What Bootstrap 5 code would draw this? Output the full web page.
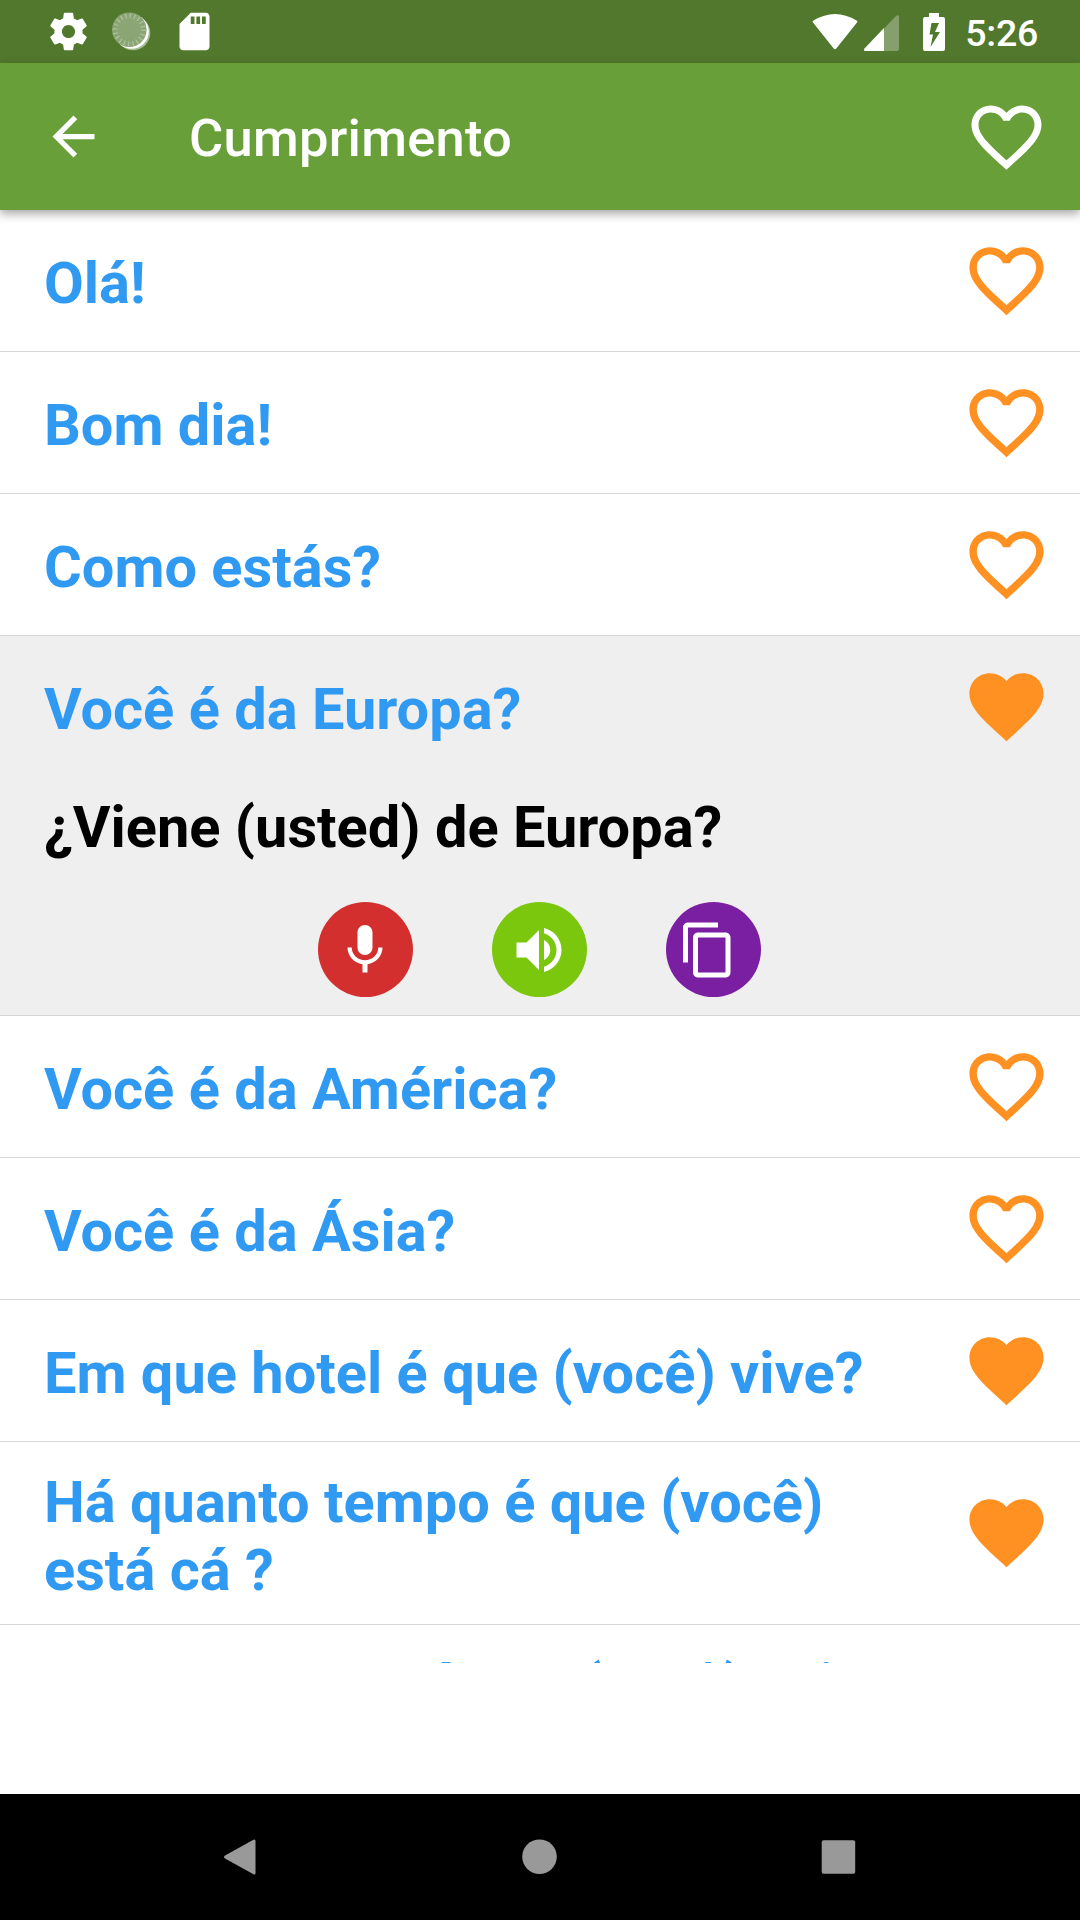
<!DOCTYPE html>
<html lang="pt">
<head>
<meta charset="utf-8">
<meta name="viewport" content="width=device-width, initial-scale=1">
<title>Cumprimento</title>
<link href="https://cdn.jsdelivr.net/npm/bootstrap@5.3.0/dist/css/bootstrap.min.css" rel="stylesheet">
<style>
  body { font-family: Roboto, "Noto Sans", sans-serif; background: #fff; }
  svg { display: block; flex: none; }
  .screen { width: 1080px; height: 1920px; }
  .statusbar { height: 63px; padding: 0 42px 0 46px; background: #51782c; color: #fff; }
  .status-icons { gap: 18px; }
  .clock { font-size: 37.5px; font-weight: 500; line-height: 44px; padding-top: 2px; margin-left: 20px; letter-spacing: -.3px; }
  .appbar { height: 147px; padding: 0 31px 0 42px; background: #689f38; color: #fff; box-shadow: 0 4px 9px rgba(0,0,0,.34); z-index: 2; }
  .app-title { font-size: 52.5px; font-weight: 500; line-height: 62px; margin-left: 84px; padding-top: 3px; letter-spacing: .25px; }
  .phrases { height: 1453px; }
  .phrase { border: 0; border-bottom: 1px solid #d6d6d6; border-radius: 0; padding: 0; color: #309af2; background: #fff; }
  .phrase-line { min-height: 141px; padding: 20px 29px 20px 44px; }
  .phrase-text { width: 840px; font-size: 57.75px; font-weight: 700; line-height: 68px; padding-top: 4px; }
  .phrase-line.two-lines { height: 182px; padding-bottom: 21px; }
  .two-lines .phrase-text { padding-top: 6px; }
  .phrase.open { background: #efefef; height: 380px; }
  .translation { color: #000; padding: 10px 44px 0; font-size: 57.75px; font-weight: 700; line-height: 68px; margin-top: 6px; }
  .heart { color: #ff9122; width: 89px; height: 89px; }
  .actions { gap: 79px; margin-top: 41px; padding-right: 2px; }
  .round-btn { width: 95px; height: 95px; color: #fff; border: 0; border-radius: 50%; padding: 0; }
  .btn-mic { background: #d32f2f; }
  .btn-play { background: #7bc70e; }
  .btn-copy { background: #7b1fa2; padding-right: 10px; }
  .sysnav { height: 126px; background: #000; color: #999; gap: 264px; padding: 0 2px 1px 0; }
</style>
</head>
<body>
<svg width="0" height="0" class="d-none">
  <symbol id="heart-o" viewBox="0 0 24 24"><path fill="currentColor" d="M16.5 3c-1.74 0-3.41.81-4.5 2.09C10.91 3.81 9.24 3 7.5 3 4.42 3 2 5.42 2 8.5c0 3.78 3.4 6.86 8.55 11.54L12 21.35l1.45-1.32C18.6 15.36 22 12.28 22 8.5 22 5.42 19.58 3 16.5 3zm-4.4 15.55l-.1.1-.1-.1C7.14 14.24 4 11.39 4 8.5 4 6.5 5.5 5 7.5 5c1.54 0 3.04.99 3.57 2.36h1.87C13.46 5.99 14.96 5 16.5 5c2 0 3.5 1.5 3.5 3.5 0 2.89-3.14 5.74-7.9 10.05z"/></symbol>
  <symbol id="heart-f" viewBox="0 0 24 24"><path fill="currentColor" d="M12 21.35l-1.45-1.32C5.4 15.36 2 12.28 2 8.5 2 5.42 4.42 3 7.5 3c1.74 0 3.41.81 4.5 2.09C13.09 3.81 14.76 3 16.5 3 19.58 3 22 5.42 22 8.5c0 3.78-3.4 6.86-8.55 11.54L12 21.35z"/></symbol>
</svg>
<div class="screen d-flex flex-column overflow-hidden">
  <div class="statusbar d-flex align-items-center justify-content-between flex-shrink-0">
    <div class="status-icons d-flex align-items-center">
      <svg width="45" height="45" viewBox="0 0 24 24"><path fill="#fff" d="M19.43 12.98c.04-.32.07-.64.07-.98s-.03-.66-.07-.98l2.11-1.65c.19-.15.24-.42.12-.64l-2-3.46c-.12-.22-.39-.3-.61-.22l-2.49 1c-.52-.4-1.08-.73-1.69-.98l-.38-2.65C14.46 2.18 14.25 2 14 2h-4c-.25 0-.46.18-.49.42l-.38 2.65c-.61.25-1.17.59-1.69.98l-2.49-1c-.23-.09-.49 0-.61.22l-2 3.46c-.13.22-.07.49.12.64l2.11 1.65c-.04.32-.07.65-.07.98s.03.66.07.98l-2.11 1.65c-.19.15-.24.42-.12.64l2 3.46c.12.22.39.3.61.22l2.49-1c.52.4 1.08.73 1.69.98l.38 2.65c.03.24.24.42.49.42h4c.25 0 .46-.18.49-.42l.38-2.65c.61-.25 1.17-.59 1.69-.98l2.49 1c.23.09.49 0 .61-.22l2-3.46c.12-.22.07-.49-.12-.64l-2.11-1.65zM12 15.5c-1.93 0-3.5-1.57-3.5-3.5s1.57-3.5 3.5-3.5 3.5 1.57 3.5 3.5-1.57 3.5-3.5 3.5z"/></svg>
      <svg width="45" height="45" viewBox="0 0 45 45"><circle cx="24" cy="24" r="17.3" fill="#a5ba92"/><circle cx="22.6" cy="22.6" r="17.2" fill="#fff"/><circle cx="20.3" cy="20.8" r="17.3" fill="#8ba674"/><circle cx="20.3" cy="20.8" r="14" fill="none" stroke="#b0c3a0" stroke-width="5" stroke-dasharray="1.1 3.3"/></svg>
      <svg width="45" height="45" viewBox="0 0 24 24"><path fill="#fff" d="M18 2h-8L4.020 8 4 20c0 1.100.9 2 2 2h12c1.100 0 2-.9 2-2V4c0-1.100-.9-2-2-2zm-6 6h-2V4h2v4zm3 0h-2V4h2v4zm3 0h-2V4h2v4z"/></svg>
    </div>
    <div class="d-flex align-items-center">
      <svg width="46" height="40" viewBox="0 0 46 40"><path fill="#fff" d="M1 10.500Q0 9.300 1.500 8.400Q23 -4.600 44.500 8.400Q46 9.300 45 10.500L24.300 36.500Q23 38 21.700 36.500Z"/></svg>
      <svg class="ms-1" width="38" height="40" viewBox="0 0 38 40"><path fill="#85a06c" d="M22 16.500L33.500 4.500Q37 2 37 5V37Q37 39 35 39H22Z"/><path fill="#fff" d="M22 16V39H3.500Q1 39 2.500 36.500Z"/></svg>
      <svg width="45" height="40" viewBox="-23 0 45 40"><path fill="#fff" fill-rule="evenodd" d="M6 1h10v4h4q2 0 2 2v30q0 2-2 2H2q-2 0-2-2V7q0-2 2-2h4zM8.500 11L6.500 22.500h3.500L7.500 35L17 20h-5l4-9z"/></svg>
      <span class="clock">5:26</span>
    </div>
  </div>

  <header class="appbar d-flex align-items-center flex-shrink-0 position-relative">
    <svg width="63" height="63" viewBox="0 0 24 24"><path fill="#fff" d="M20 11H7.830l5.590-5.590L12 4l-8 8 8 8 1.410-1.410L7.830 13H20v-2z"/></svg>
    <h1 class="app-title mb-0">Cumprimento</h1>
    <svg class="ms-auto" width="85" height="84"><use href="#heart-o"/></svg>
  </header>

  <main class="phrases list-group list-group-flush rounded-0 overflow-hidden flex-shrink-0">
    <div class="list-group-item phrase flex-shrink-0"><div class="phrase-line d-flex align-items-center justify-content-between"><div class="phrase-text">Olá!</div><svg class="heart"><use href="#heart-o"/></svg></div></div>
    <div class="list-group-item phrase flex-shrink-0"><div class="phrase-line d-flex align-items-center justify-content-between"><div class="phrase-text">Bom dia!</div><svg class="heart"><use href="#heart-o"/></svg></div></div>
    <div class="list-group-item phrase flex-shrink-0"><div class="phrase-line d-flex align-items-center justify-content-between"><div class="phrase-text">Como estás?</div><svg class="heart"><use href="#heart-o"/></svg></div></div>
    <div class="list-group-item phrase open flex-shrink-0">
      <div class="phrase-line d-flex align-items-center justify-content-between"><div class="phrase-text">Você é da Europa?</div><svg class="heart"><use href="#heart-f"/></svg></div>
      <div class="translation">¿Viene (usted) de Europa?</div>
      <div class="actions d-flex justify-content-center">
        <button class="round-btn btn-mic d-flex align-items-center justify-content-center" aria-label="Gravar"><svg width="60" height="60" viewBox="0 0 24 24"><path fill="#fff" d="M12 14c1.660 0 2.990-1.340 2.990-3L15 5c0-1.660-1.340-3-3-3S9 3.340 9 5v6c0 1.660 1.340 3 3 3zm5.300-3c0 3-2.540 5.100-5.300 5.100S6.700 14 6.700 11H5c0 3.410 2.720 6.230 6 6.720V21h2v-3.280c3.280-.48 6-3.300 6-6.720h-1.700z"/></svg></button>
        <button class="round-btn btn-play d-flex align-items-center justify-content-center" aria-label="Ouvir"><svg width="60" height="60" viewBox="0 0 24 24"><path fill="#fff" d="M3 9v6h4l5 5V4L7 9H3zm13.500 3c0-1.770-1.020-3.290-2.500-4.030v8.050c1.480-.73 2.500-2.250 2.500-4.020zM14 3.230v2.060c2.890.86 5 3.540 5 6.710s-2.110 5.850-5 6.710v2.060c4.010-.91 7-4.490 7-8.770s-2.990-7.860-7-8.770z"/></svg></button>
        <button class="round-btn btn-copy d-flex align-items-center justify-content-center" aria-label="Copiar"><svg width="60" height="60" viewBox="0 0 24 24"><path fill="#fff" d="M16 1H4c-1.100 0-2 .9-2 2v14h2V3h12V1zm3 4H8c-1.100 0-2 .9-2 2v14c0 1.100.9 2 2 2h11c1.100 0 2-.9 2-2V7c0-1.100-.9-2-2-2zm0 16H8V7h11v14z"/></svg></button>
      </div>
    </div>
    <div class="list-group-item phrase flex-shrink-0"><div class="phrase-line d-flex align-items-center justify-content-between"><div class="phrase-text">Você é da América?</div><svg class="heart"><use href="#heart-o"/></svg></div></div>
    <div class="list-group-item phrase flex-shrink-0"><div class="phrase-line d-flex align-items-center justify-content-between"><div class="phrase-text">Você é da Ásia?</div><svg class="heart"><use href="#heart-o"/></svg></div></div>
    <div class="list-group-item phrase flex-shrink-0"><div class="phrase-line d-flex align-items-center justify-content-between"><div class="phrase-text">Em que hotel é que (você) vive?</div><svg class="heart"><use href="#heart-f"/></svg></div></div>
    <div class="list-group-item phrase flex-shrink-0"><div class="phrase-line two-lines d-flex align-items-center justify-content-between"><div class="phrase-text">Há quanto tempo é que (você) está cá ?</div><svg class="heart"><use href="#heart-f"/></svg></div></div>
    <div class="list-group-item phrase flex-shrink-0"><div class="phrase-line two-lines d-flex align-items-center justify-content-between"><div class="phrase-text">Quanto tempo é que (você) vai ficar?</div><svg class="heart"><use href="#heart-o"/></svg></div></div>
  </main>

  <nav class="sysnav d-flex align-items-center justify-content-center mt-auto flex-shrink-0">
    <svg width="35" height="36" viewBox="0 0 35 36"><path fill="#999" d="M2 16.500L30 1Q32.500 -.5 32.500 2V34Q32.500 36.500 30 35L2 19.500Q0 18 2 16.500Z"/></svg>
    <svg width="35" height="36" viewBox="0 0 35 36"><circle cx="17.500" cy="17.700" r="17.300" fill="#999"/></svg>
    <svg width="35" height="36" viewBox="0 0 35 36"><rect x=".7" y="1.300" width="33.500" height="33.500" rx="2" fill="#999"/></svg>
  </nav>
</div>
<script src="https://cdn.jsdelivr.net/npm/bootstrap@5.3.0/dist/js/bootstrap.bundle.min.js"></script>
</body>
</html>
